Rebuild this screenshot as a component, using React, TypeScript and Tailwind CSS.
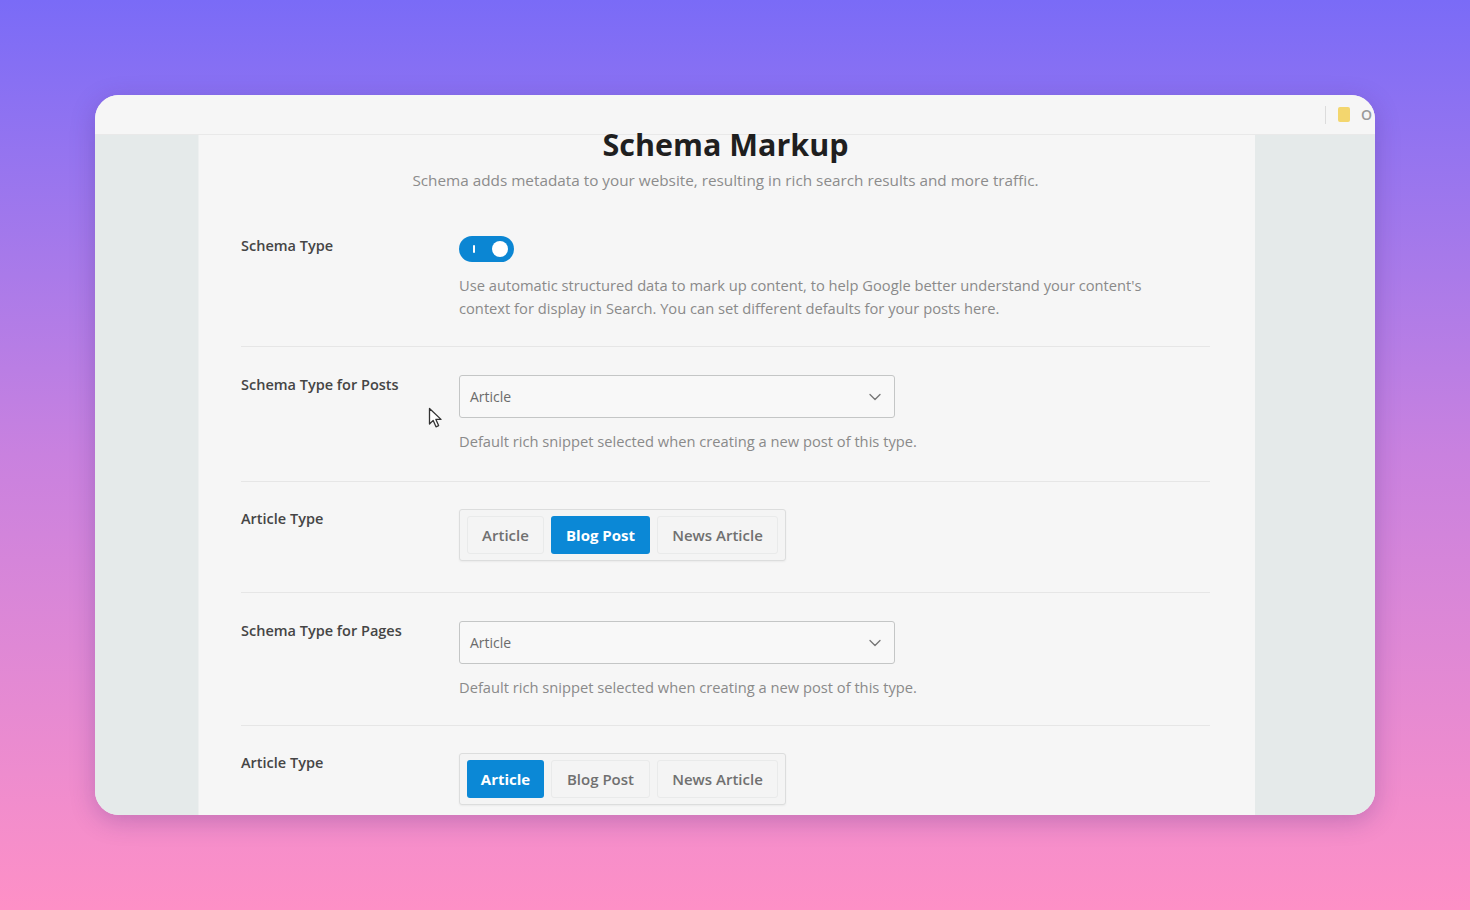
import { ChevronDown } from "lucide-react";

const font = { fontFamily: '"Open Sans", "Noto Sans", sans-serif' };

function Toggle() {
  return (
    <div className="relative h-[26px] w-[55px] rounded-full bg-[#0b86d3]">
      <span className="absolute left-[14px] top-[9px] h-[8px] w-[2px] rounded bg-white" />
      <span className="absolute right-[6px] top-[5px] h-[16px] w-[16px] rounded-full bg-white" />
    </div>
  );
}

function Select({ value }: { value: string }) {
  return (
    <div className="flex h-[43px] w-[436px] items-center justify-between rounded-[3px] border border-[#c4c6c6] bg-[#f8f8f8] pl-[10px] pr-[9px]">
      <span className="text-[14px] text-[#6b6b6b]">{value}</span>
      <ChevronDown className="h-[20px] w-[20px] text-[#777]" strokeWidth={1.6} />
    </div>
  );
}

function Segmented({ active }: { active: string }) {
  const items = [
    { label: "Article", w: "w-[77px]" },
    { label: "Blog Post", w: "w-[99px]" },
    { label: "News Article", w: "w-[121px]" },
  ];
  return (
    <div className="flex w-fit gap-[7px] rounded-[3px] border border-[#dcdddd] bg-[#f4f4f4] px-[7px] py-[6px] shadow-[0_1px_2px_rgba(0,0,0,0.05)]">
      {items.map((it) =>
        it.label === active ? (
          <div
            key={it.label}
            className={`flex h-[38px] ${it.w} items-center justify-center rounded-[3px] bg-[#0b88d6] text-[15px] font-bold text-white`}
          >
            {it.label}
          </div>
        ) : (
          <div
            key={it.label}
            className={`flex h-[38px] ${it.w} items-center justify-center rounded-[3px] border border-[#e9eaea] text-[15px] font-semibold text-[#707070]`}
          >
            {it.label}
          </div>
        )
      )}
    </div>
  );
}

function Row({
  label,
  children,
  className,
}: {
  label: string;
  children: React.ReactNode;
  className: string;
}) {
  return (
    <div className={`grid grid-cols-[218px_1fr] ${className}`}>
      <div className="text-[14.5px] font-semibold leading-[20px] text-[#454545]">{label}</div>
      <div>{children}</div>
    </div>
  );
}

export default function App() {
  return (
    <div
      className="relative h-[910px] w-full overflow-hidden bg-linear-to-b from-[#7a6bf7] via-[#c981df] to-[#fe90c6] px-[95px] pt-[95px]"
      style={font}
    >
      <div className="flex h-[720px] flex-col overflow-hidden rounded-[24px] bg-[#f6f6f6] shadow-[0_6px_24px_rgba(60,30,120,0.25)]">
        {/* top bar */}
        <div className="flex h-[40px] shrink-0 items-center justify-end border-b border-[#e9e9e9] bg-[#f6f6f6]">
          <span className="h-[18px] w-px bg-[#dcdcdc]" />
          <span className="ml-[12px] h-[15px] w-[12px] rounded-[2px] bg-[#f3d66e]" />
          <span className="ml-[11px] mr-[3px] text-[14px] font-semibold leading-none text-[#9a9a9a]">O</span>
        </div>

        <div className="flex min-h-0 flex-1">
          <div className="w-[103px] shrink-0 bg-[#e5eaea]" />

          <div className="relative w-[1057px] shrink-0 border-l border-[#eef0f0] bg-[#f6f6f6] pl-[42px] pr-[45px]">
            <h1 className="-mt-[9px] text-center text-[30.5px] font-bold leading-[36px] text-[#1f1f1f]">
              Schema Markup
            </h1>
            <p className="mt-[8px] text-center text-[15.3px] leading-[20px] text-[#8c8c8c]">
              Schema adds metadata to your website, resulting in rich search results and more traffic.
            </p>

            <Row label="Schema Type" className="mt-[46px] border-b border-[#e6e6e6] pb-[26px]">
              <Toggle />
              <p className="mt-[12px] text-[14.7px] leading-[23px] text-[#8a8a8a]">
                Use automatic structured data to mark up content, to help Google better understand your content's
                <br />
                context for display in Search. You can set different defaults for your posts here.
              </p>
            </Row>

            <Row label="Schema Type for Posts" className="border-b border-[#e6e6e6] pt-[28px] pb-[30px]">
              <Select value="Article" />
              <p className="mt-[13px] text-[14.7px] leading-[20px] text-[#8a8a8a]">
                Default rich snippet selected when creating a new post of this type.
              </p>
            </Row>

            <Row label="Article Type" className="border-b border-[#e6e6e6] pt-[27px] pb-[31px]">
              <Segmented active="Blog Post" />
            </Row>

            <Row label="Schema Type for Pages" className="border-b border-[#e6e6e6] pt-[28px] pb-[28px]">
              <Select value="Article" />
              <p className="mt-[13px] text-[14.7px] leading-[20px] text-[#8a8a8a]">
                Default rich snippet selected when creating a new post of this type.
              </p>
            </Row>

            <Row label="Article Type" className="pt-[27px]">
              <Segmented active="Article" />
            </Row>

            {/* mouse cursor */}
            <svg
              className="absolute left-[229px] top-[272px]"
              width="16"
              height="22"
              viewBox="0 0 16 22"
            >
              <path
                d="M1.5 1.5 L1.5 17 L5.2 13.4 L8 19.8 L10.6 18.6 L7.9 12.4 L13 12.4 Z"
                fill="#fff"
                stroke="#333"
                strokeWidth="1.3"
                strokeLinejoin="round"
              />
            </svg>
          </div>

          <div className="flex-1 bg-[#e5eaea]" />
        </div>
      </div>
    </div>
  );
}
